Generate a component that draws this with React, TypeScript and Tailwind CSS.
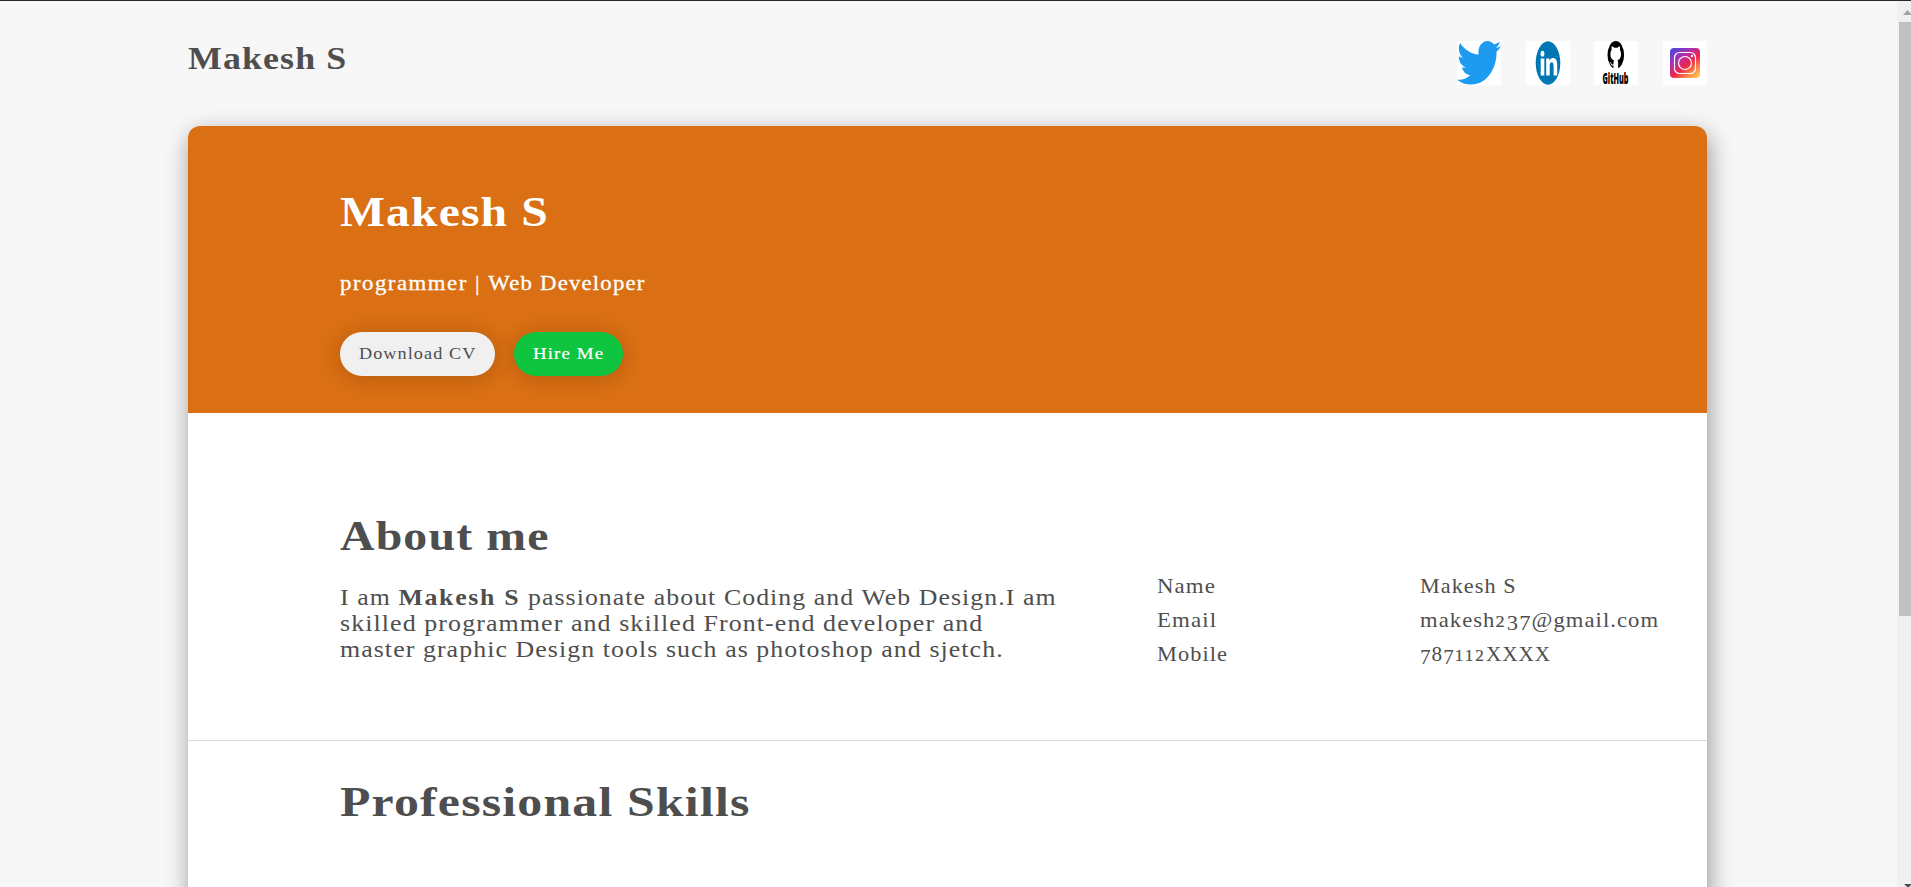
import type { ReactNode } from "react";
import { FaTwitter } from "react-icons/fa";

/* Horizontally widened run of serif text */
function Wide({ className, children }: { className: string; children: ReactNode }) {
  return (
    <span className={`inline-block origin-left whitespace-nowrap tracking-[1px] ${className}`}>
      {children}
    </span>
  );
}

/* Old-style figures: descending digits and x-height digits */
function Low({ children }: { children: ReactNode }) {
  return <span className="relative top-[3px]">{children}</span>;
}

function Small({ children }: { children: ReactNode }) {
  return (
    <span className="text-[17px] leading-none tracking-[2px] [-webkit-text-stroke:0.200px_#4e4e4e]">
      {children}
    </span>
  );
}

function Social() {
  return (
    <div className="mt-10 flex gap-[24.67px]">
      <a className="block h-11 w-11 bg-white">
        <FaTwitter viewBox="0 48 512 420" preserveAspectRatio="none" className="h-11 w-11 text-[#1d9bf0]" />
      </a>
      <a className="block h-11 w-11 bg-white">
        <svg viewBox="0 0 44 44" className="h-11 w-11">
          <ellipse cx="22" cy="22" rx="12.3" ry="21.7" fill="#0077b5" />
          <g fill="#fff">
            <ellipse cx="16.500" cy="12.800" rx="1.900" ry="3" />
            <rect x="14.700" y="17.500" width="3.600" height="17" />
            <path d="M20.200 17.500h3.200v2.400c.7-1.700 1.900-2.800 3.500-2.800 2.900 0 4.300 2.600 4.300 7v10.400h-3.600v-9.300c0-2.600-.5-4-1.900-4-1.500 0-2 1.600-2 4v9.300h-3.500z" />
          </g>
        </svg>
      </a>
      <a className="block h-11 w-11 bg-white">
        <svg viewBox="0 0 44 44" className="h-11 w-11 overflow-visible">
          <ellipse cx="21.800" cy="14" rx="8.300" ry="13.900" fill="#000" />
          <path
            transform="translate(21.800 16) scale(.9 .96) translate(-21.800 -16)"
            d="M17.400 4.800c1 .2 1.900.9 2.500 1.500h3.800c.6-.6 1.500-1.300 2.500-1.500.4 1.300.4 2.600.2 3.600.8 1.200 1.200 2.700 1.200 4.500 0 4.100-1.600 5.900-3.900 6.500.5.800.7 1.800.7 3.200V29.500h-5.200v-4.600c-1.600.5-2.600-.3-3.100-1.800-.3-.8-.7-1.500-1.200-1.900.9-.3 1.600.4 2 1.500.5 1.100 1.300 1.200 2.300.8.1-1.500.2-3.200.6-4.100-2.200-.6-3.900-2.300-3.900-6.500 0-1.800.4-3.300 1.300-4.500-.3-1.100-.2-2.400.2-3.600z"
            fill="#fff"
          />
          <text
            x="8.500"
            y="42.700"
            textLength="26"
            lengthAdjust="spacingAndGlyphs"
            fontFamily="Open Sans"
            fontWeight="800"
            fontSize="16"
            fill="#000"
          >
            GitHub
          </text>
        </svg>
      </a>
      <a className="block h-11 w-11 bg-white">
        <svg viewBox="0 0 44 44" className="h-11 w-11" fill="none">
          <defs>
            <linearGradient id="ig" x1="0.1" y1="0.05" x2="0.85" y2="1">
              <stop offset="0" stopColor="#5145d8" />
              <stop offset="0.3" stopColor="#b02fb0" />
              <stop offset="0.58" stopColor="#f02543" />
              <stop offset="0.8" stopColor="#fb8245" />
              <stop offset="1" stopColor="#fec053" />
            </linearGradient>
          </defs>
          <rect x="7" y="7" width="30" height="30" rx="4" fill="url(#ig)" />
          <rect x="11.500" y="11.500" width="21" height="21" rx="5" stroke="#fff" strokeWidth="1.200" />
          <circle cx="22" cy="22" r="6.500" stroke="#fff" strokeWidth="1.200" />
          <circle cx="29" cy="15" r="1.200" fill="#fff" />
        </svg>
      </a>
    </div>
  );
}

function Scrollbar() {
  return (
    <div className="flex w-[14px] shrink-0 flex-col bg-[#f0f0f0] pl-0.5">
      <svg viewBox="0 0 12 21" className="h-[21px] w-3 shrink-0">
        <path d="M4 14 8.500 9l4.500 5z" fill="#a3a3a3" />
      </svg>
      <div className="h-[594px] w-3 shrink-0 bg-[#c1c1c1]" />
      <div className="grow" />
      <svg viewBox="0 0 12 3" className="h-[3px] w-3 shrink-0">
        <path d="M5 0h8L10 3H8z" fill="#505050" />
      </svg>
    </div>
  );
}

export default function App() {
  return (
    <div className="flex h-[887px] w-[1911px] overflow-hidden border-t border-[#2b262c] bg-[#f7f7f7] font-['Liberation_Serif',serif] text-[#4e4e4e]">
      <div className="h-full grow overflow-hidden pl-[188px]">
        <header className="flex h-[125px] w-[1519px] items-start justify-between">
          <div className="mt-[39px] text-[32px] leading-9 font-bold">
            <Wide className="scale-x-[1.12]">Makesh S</Wide>
          </div>
          <Social />
        </header>

        <main className="h-[900px] w-[1519px] rounded-[12px] bg-white shadow-[2px_8px_24px_rgba(0,0,0,0.4)]">
          <section className="h-[287px] rounded-t-[12px] bg-[#da6f13] pt-[62px] pl-[152px] text-white">
            <h1 className="text-[42px] leading-[48px] font-bold">
              <Wide className="scale-x-[1.134]">Makesh S</Wide>
            </h1>
            <p className="mt-[35px] text-[21px] leading-6">
              <Wide className="scale-x-[1.085] [-webkit-text-stroke:0.300px_white]">
                <span className="tracking-[1.400px]">programmer | </span>
                <span className="tracking-[1.100px]">Web Developer</span>
              </Wide>
            </p>
            <div className="mt-[37px] flex gap-[19px] text-[17px] leading-[44px]">
              <button className="h-11 w-[155px] rounded-full bg-[#f0f0f0] pl-[19px] text-left text-[#4e4e4e] shadow-[0_2px_20px_rgba(0,0,0,0.18)]">
                <Wide className="scale-x-[1.07]">Download CV</Wide>
              </button>
              <button className="h-11 w-[109px] rounded-full bg-[#0fc43f] pl-[19px] text-left text-white shadow-[0_2px_20px_rgba(0,0,0,0.18)]">
                <Wide className="scale-x-[1.11] [-webkit-text-stroke:0.200px_white]">Hire Me</Wide>
              </button>
            </div>
          </section>

          <section className="flex h-[328px] border-b border-[#d9d9d9] pl-[152px]">
            <div className="w-[817px] pt-[99px]">
              <h2 className="text-[42px] leading-[48px] font-bold">
                <Wide className="scale-x-[1.138]">About me</Wide>
              </h2>
              <p className="mt-6 flex flex-col items-start text-[24px] leading-[26px]">
                <Wide className="scale-x-[1.075]">
                  I am <b className="tracking-[1.600px]">Makesh S</b> passionate about Coding and Web Design.I am
                </Wide>
                <Wide className="scale-x-[1.081]">skilled programmer and skilled Front-end developer and</Wide>
                <Wide className="scale-x-[1.077]">master graphic Design tools such as photoshop and sjetch.</Wide>
              </p>
            </div>
            <dl className="grid h-fit grid-cols-[263px_280px] pt-[156px] text-[21px] leading-[34px]">
              <dt><Wide className="scale-x-[1.09]">Name</Wide></dt>
              <dd><Wide className="scale-x-[1.056]">Makesh S</Wide></dd>
              <dt><Wide className="scale-x-[1.09]">Email</Wide></dt>
              <dd>
                <Wide className="scale-x-[1.076]">
                  makesh<Small>2</Small><Low>37</Low>@gmail.com
                </Wide>
              </dd>
              <dt><Wide className="scale-x-[1.065]">Mobile</Wide></dt>
              <dd>
                <Wide className="scale-x-[1.008]">
                  <Low>7</Low>8<Low>7</Low><Small>112</Small>XXXX
                </Wide>
              </dd>
            </dl>
          </section>

          <section className="pt-[37px] pl-[152px]">
            <h2 className="text-[42px] leading-[48px] font-bold">
              <Wide className="scale-x-[1.186]">Professional Skills</Wide>
            </h2>
          </section>
        </main>
      </div>
      <Scrollbar />
    </div>
  );
}
